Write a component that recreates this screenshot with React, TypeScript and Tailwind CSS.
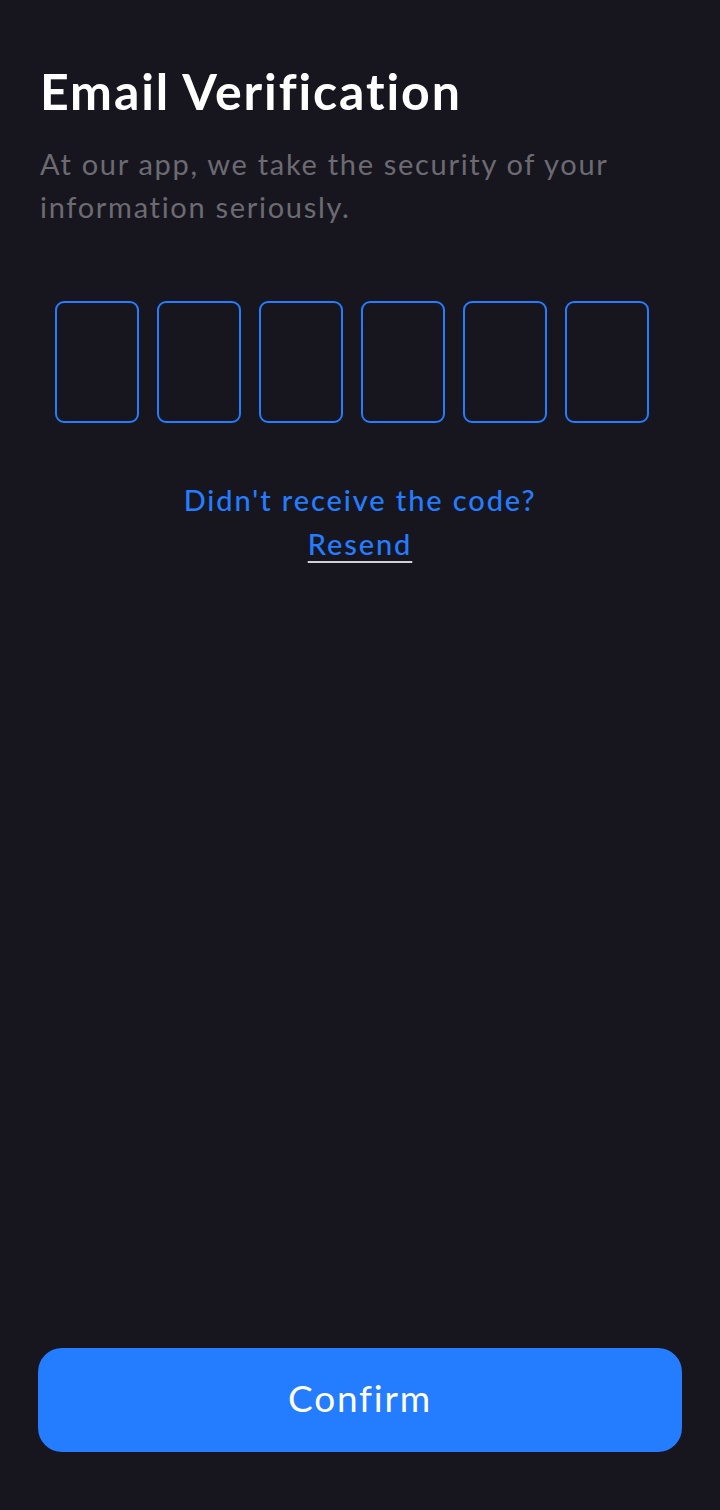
export default function App() {
  return (
    <div
      className="flex h-[1510px] w-[720px] flex-col bg-[#17161f] px-10"
      style={{ fontFamily: 'Lato, "Open Sans", sans-serif' }}
    >
      <h1 className="pt-[60px] text-[50px] leading-[62px] font-bold tracking-[1.9px] text-white">
        Email Verification
      </h1>
      <p className="mt-[20px] text-[29px] leading-[43px] tracking-[1.7px] text-[#6c6b72]">
        At our app, we take the security of your information seriously.
      </p>

      <div className="mt-[73px] flex gap-[18px] pl-[15px]">
        {[0, 1, 2, 3, 4, 5].map((i) => (
          <div
            key={i}
            className="h-[122px] w-[84px] rounded-[9px] border-[2.5px] border-[#247cff]"
          />
        ))}
      </div>

      <div className="mt-[55px] flex flex-col items-center text-[29px] leading-[44px] tracking-[1.9px] text-[#247cff]">
        <span className="font-medium">Didn't receive the code?</span>
        <a className="font-medium underline decoration-[#d0d0d8] decoration-2 underline-offset-[6px]">
          Resend
        </a>
      </div>

      <div className="flex-1" />

      <button className="mb-[58px] -mx-[2px] h-[104px] rounded-[24px] bg-[#247cff] pb-[4px] text-[37px] tracking-[1.8px] text-white">
        Confirm
      </button>
    </div>
  );
}
